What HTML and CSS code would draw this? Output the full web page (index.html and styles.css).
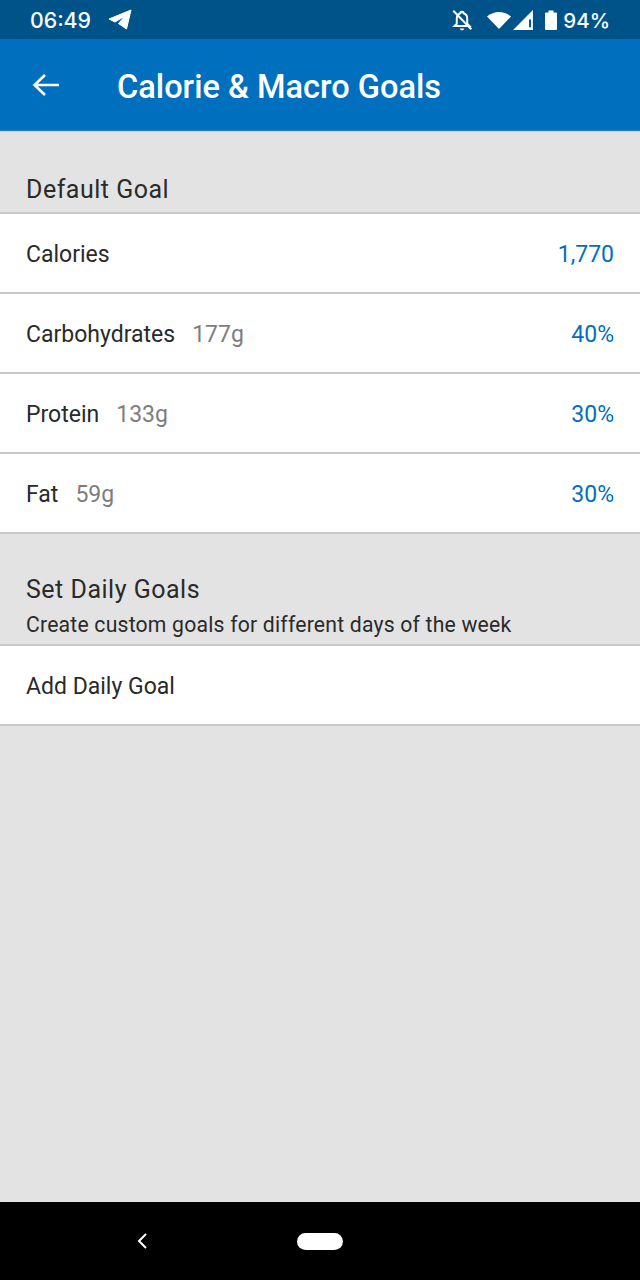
FILE: index.html
```
<!DOCTYPE html>
<html lang="en">
<head>
<meta charset="utf-8">
<title>Calorie &amp; Macro Goals</title>
<link rel="stylesheet" href="styles.css">
</head>
<body>
<div class="screen">
  <div class="status">
    <div class="status-left">
      <span class="time">06:49</span>
      <svg class="tg" viewBox="0 0 24 22" width="24" height="22"><path d="M1 10 L23 1 L18.500 20 L10.500 14.500 L17 7 L7 13 Z" fill="#fff" stroke="#fff" stroke-width="1" stroke-linejoin="round"/></svg>
    </div>
    <div class="status-right">
      <svg class="bell" viewBox="0 0 22 22" width="24" height="24"><path d="M11 3.500c-1 0-1.500.6-1.500 1.300-2.200.7-3.300 2.600-3.300 5v4.700l-2 2h13.600l-2-2V9.800c0-2.400-1.100-4.300-3.300-5 0-.7-.5-1.300-1.500-1.300z" fill="none" stroke="#fff" stroke-width="1.800"/><path d="M9 18.800h4c0 1-1 1.700-2 1.700s-2-.7-2-1.700z" fill="#fff"/><path d="M3 2.500 L19.500 19.500" stroke="#fff" stroke-width="1.800"/></svg>
      <svg class="wifi" viewBox="0 0 26 20" width="26" height="20"><path d="M1 6.500 C8 0.500 18 0.500 25 6.500 L13 19 Z" fill="#fff"/></svg>
      <svg class="signal" viewBox="0 0 20 20" width="22" height="22"><path d="M1 19 L19 1 V19 Z M15.500 9.500 V16.500 H17.300 V9.500 Z" fill="#fff" fill-rule="evenodd"/></svg>
      <svg class="battery" viewBox="0 0 14 22" width="14" height="22"><path d="M4.500 1.500h5v2h2.500a1 1 0 0 1 1 1v15.500a1 1 0 0 1-1 1H2a1 1 0 0 1-1-1V4.500a1 1 0 0 1 1-1h2.500z" fill="#fff"/></svg>
      <span class="pct">94%</span>
    </div>
  </div>
  <header class="appbar">
    <svg class="back" viewBox="0 0 28 24" width="28" height="24"><path d="M27 12 H3 M13 2 L2.500 12 L13 22" fill="none" stroke="#fff" stroke-width="2.600"/></svg>
    <h1 class="title">Calorie &amp; Macro Goals</h1>
  </header>
  <main class="content">
    <section class="section first">
      <h2 class="section-title">Default Goal</h2>
    </section>
    <ul class="list">
      <li class="row"><span class="label">Calories</span><span class="value">1,770</span></li>
      <li class="row"><span class="label">Carbohydrates<span class="grams">177g</span></span><span class="value">40%</span></li>
      <li class="row"><span class="label">Protein<span class="grams">133g</span></span><span class="value">30%</span></li>
      <li class="row"><span class="label">Fat<span class="grams">59g</span></span><span class="value">30%</span></li>
    </ul>
    <section class="section second">
      <h2 class="section-title">Set Daily Goals</h2>
      <p class="section-sub">Create custom goals for different days of the week</p>
    </section>
    <ul class="list">
      <li class="row"><span class="label">Add Daily Goal</span></li>
    </ul>
  </main>
  <nav class="navbar">
    <svg class="nav-back" viewBox="0 0 12 18" width="12" height="18"><path d="M10 2 L3 9 L10 16" fill="none" stroke="#fff" stroke-width="2"/></svg>
    <span class="pill"></span>
  </nav>
</div>
</body>
</html>
```
FILE: styles.css
```
* { box-sizing: border-box; }
html, body { margin: 0; padding: 0; }
body { font-family: Roboto, "Liberation Sans", sans-serif; background: #e3e3e3; }
.screen { width: 640px; height: 1280px; display: flex; flex-direction: column; overflow: hidden; }
.status { height: 39px; flex: none; background: #005389; color: #fff; display: flex; justify-content: space-between; align-items: center; padding: 1px 30px 0; }
.status-left, .status-right { display: flex; align-items: center; }
.time { font-family: Inter, Roboto, sans-serif; font-size: 21.300px; font-weight: 500; }
.tg { margin-left: 17px; }
.pct { font-family: Inter, Roboto, sans-serif; font-size: 20.500px; font-weight: 500; margin-left: 5px; }
.bell { margin-right: 12px; }
.battery { margin-left: 10px; }
.appbar { height: 92px; flex: none; background: #006fbe; display: flex; align-items: center; padding: 0 0 0 32px; border-bottom: 1px solid #2f80bd; box-shadow: 0 1px 1px rgba(0,0,0,.08); }
.title { margin: 4px 0 0 57px; color: #fff; font-size: 32.600px; font-weight: 500; line-height: 40px; }
.content { flex: 1; }
.section { padding: 0 26px; }
.section.first { height: 81px; padding-top: 43px; }
.section.second { height: 110px; padding-top: 40px; }
.section-title { margin: 0; color: #2a2a2a; font-size: 25px; font-weight: 400; line-height: 32px; letter-spacing: .5px; }
.section-sub { margin: 4px 0 0; color: #2a2a2a; font-size: 21.200px; line-height: 30px; letter-spacing: .2px; }
.list { list-style: none; margin: 0; padding: 0; background: #fff; border-top: 2px solid #c9c9c9; }
.row { height: 80px; display: flex; justify-content: space-between; align-items: center; padding: 2px 26px 0; border-bottom: 2px solid #c9c9c9; font-size: 23px; }
.label { color: #2a2a2a; }
.grams { color: #7d7d7d; margin-left: 17px; }
.value { color: #006fbe; }
.navbar { height: 78px; flex: none; background: #000; position: relative; display: flex; align-items: center; justify-content: center; }
.nav-back { position: absolute; left: 136px; top: 30px; }
.pill { width: 46px; height: 17px; background: #fff; border-radius: 9px; }
```
